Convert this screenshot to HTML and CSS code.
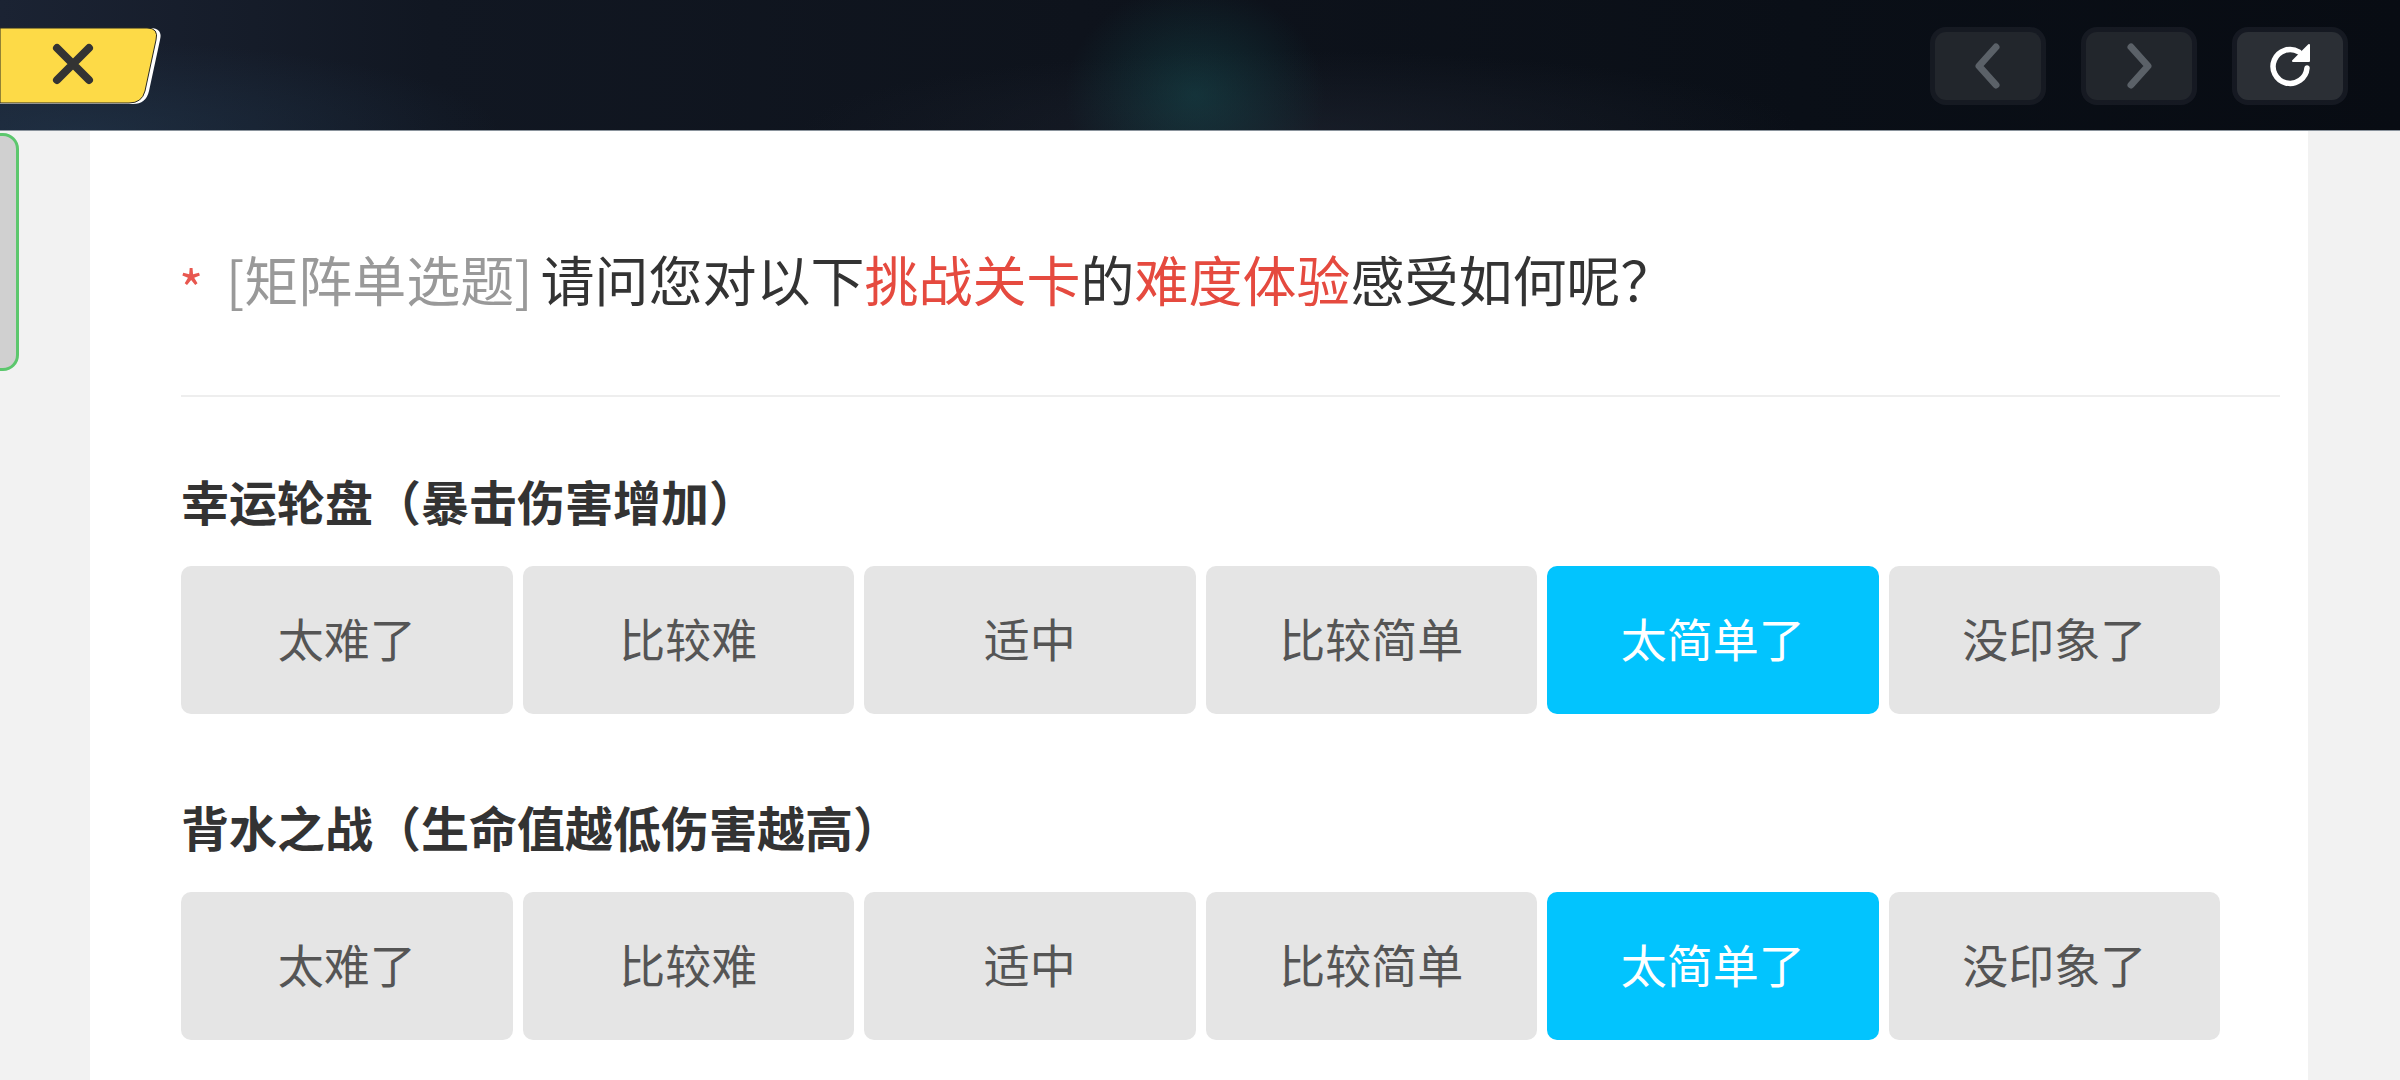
FILE: index.html
```html
<!DOCTYPE html>
<html lang="zh-CN">
<head>
<meta charset="utf-8">
<title>问卷</title>
<link rel="stylesheet" href="styles.css">
</head>
<body>
<header class="topbar">
  <button class="close-btn" aria-label="关闭">
    <svg class="close-shape" width="166" height="78" viewBox="0 0 166 78">
      <path d="M0 1 H150 Q163 1 160 13 L149 64 Q146 77 133 77 H0 Z" fill="#ffffff"/>
      <path d="M0 1 H147 Q159 1 156 13 L145 64 Q142 76 129 76 H0 Z" fill="#fdda47" stroke="#2a2a22" stroke-width="1"/>
      <path d="M57 21 L89 53 M89 21 L57 53" stroke="#333333" stroke-width="8" stroke-linecap="round"/>
    </svg>
  </button>
  <nav class="nav-group">
    <button class="nav-btn" aria-label="后退">
      <svg width="48" height="52" viewBox="0 0 48 52"><polyline points="32,7 15,26 32,45" fill="none" stroke="#5b6168" stroke-width="7" stroke-linecap="round" stroke-linejoin="round"/></svg>
    </button>
    <button class="nav-btn" aria-label="前进">
      <svg width="48" height="52" viewBox="0 0 48 52"><polyline points="16,7 33,26 16,45" fill="none" stroke="#5b6168" stroke-width="7" stroke-linecap="round" stroke-linejoin="round"/></svg>
    </button>
    <button class="nav-btn nav-btn-active" aria-label="刷新">
      <svg width="50" height="50" viewBox="0 0 50 50"><path d="M34 11 A17 17 0 1 0 42 27" fill="none" stroke="#ffffff" stroke-width="5.5" stroke-linecap="round"/><polygon points="44,4 44,20 28,20" fill="#ffffff" stroke="#ffffff" stroke-width="2" stroke-linejoin="round"/></svg>
    </button>
  </nav>
</header>

<main class="main">
  <div class="side-tab"></div>
  <section class="card">
    <h1 class="question">
      <span class="required">*</span>
      <span class="qtype">[矩阵单选题]</span>
      <span class="qtext">请问您对以下<em class="hl">挑战关卡</em>的<em class="hl">难度体验</em>感受如何呢？</span>
    </h1>
    <div class="divider"></div>

    <div class="matrix-row">
      <h2 class="row-label">幸运轮盘（暴击伤害增加）</h2>
      <div class="options">
        <div class="option">太难了</div>
        <div class="option">比较难</div>
        <div class="option">适中</div>
        <div class="option">比较简单</div>
        <div class="option option-selected">太简单了</div>
        <div class="option">没印象了</div>
      </div>
    </div>

    <div class="matrix-row">
      <h2 class="row-label">背水之战（生命值越低伤害越高）</h2>
      <div class="options">
        <div class="option">太难了</div>
        <div class="option">比较难</div>
        <div class="option">适中</div>
        <div class="option">比较简单</div>
        <div class="option option-selected">太简单了</div>
        <div class="option">没印象了</div>
      </div>
    </div>
  </section>
</main>
</body>
</html>
```

FILE: styles.css
```css
* { box-sizing: border-box; }

html, body {
  margin: 0;
  padding: 0;
}

body {
  width: 2400px;
  height: 1080px;
  overflow: hidden;
  background: #f2f2f2;
  font-family: "Noto Sans CJK SC", "Noto Sans", sans-serif;
}

.topbar {
  height: 131px;
  display: flex;
  align-items: center;
  justify-content: space-between;
  padding-right: 57px;
  border-bottom: 1px solid #8a939c;
  background:
    radial-gradient(ellipse 130px 110px at 1195px 95px, rgba(22, 78, 82, 0.5), rgba(22, 78, 82, 0) 100%),
    radial-gradient(ellipse 420px 90px at 80px 131px, rgba(34, 56, 78, 0.55), rgba(34, 56, 78, 0) 100%),
    radial-gradient(ellipse 500px 80px at 1300px 131px, rgba(30, 36, 48, 0.6), rgba(30, 36, 48, 0) 100%),
    linear-gradient(90deg, #1b2333 0%, #111722 18%, #0e131c 45%, #0a0f17 75%, #080c13 100%);
}

.close-btn {
  border: 0;
  padding: 0;
  background: none;
  width: 166px;
  height: 78px;
  margin-top: 1px;
  display: block;
}

.close-shape { display: block; }

.nav-group {
  display: flex;
  gap: 45px;
  margin-top: 1px;
}

.nav-btn {
  width: 106px;
  height: 68px;
  border: 0;
  padding: 0;
  border-radius: 11px;
  background: #22262c;
  box-shadow: 0 0 0 5px rgba(32, 37, 45, 0.55);
  display: flex;
  align-items: center;
  justify-content: center;
}

.nav-btn-active {
  background: #2b2f35;
}

.nav-btn svg { display: block; }

.main {
  position: relative;
  display: flex;
  height: 949px;
  padding: 0 92px 0 90px;
}

.side-tab {
  position: absolute;
  left: -22px;
  top: 2px;
  width: 41px;
  height: 238px;
  background: #d0d0d0;
  border: 3px solid #5cc76d;
  border-radius: 16px;
}

.card {
  flex: 1;
  background: #ffffff;
  padding: 113px 28px 0 91px;
}

.question {
  margin: 0;
  font-size: 54px;
  line-height: 70px;
  font-weight: 400;
  color: #333333;
  display: flex;
  align-items: center;
  white-space: nowrap;
}

.required {
  color: #e8574f;
  font-size: 52px;
  line-height: 70px;
  width: 45px;
  flex: none;
  position: relative;
  top: 8px;
  left: -2px;
}

.qtype {
  color: #999999;
  margin-right: 8px;
}

.hl {
  font-style: normal;
  color: #e54a3f;
}

.divider {
  height: 2px;
  background: #eeeeee;
  margin-top: 81px;
}

.matrix-row {
  padding-right: 60px;
  margin-top: 73px;
}

.matrix-row + .matrix-row {
  margin-top: 82px;
}

.row-label {
  margin: 0;
  font-size: 48px;
  line-height: 60px;
  font-weight: 700;
  color: #333333;
}

.options {
  margin-top: 36px;
  display: grid;
  grid-template-columns: repeat(6, 1fr);
  gap: 10px;
}

.option {
  height: 148px;
  padding-bottom: 6px;
  border-radius: 10px;
  background: #e5e5e5;
  color: #555555;
  font-size: 46px;
  font-weight: 400;
  display: flex;
  align-items: center;
  justify-content: center;
}

.option-selected {
  background: #02c4fe;
  color: #ffffff;
}
```
